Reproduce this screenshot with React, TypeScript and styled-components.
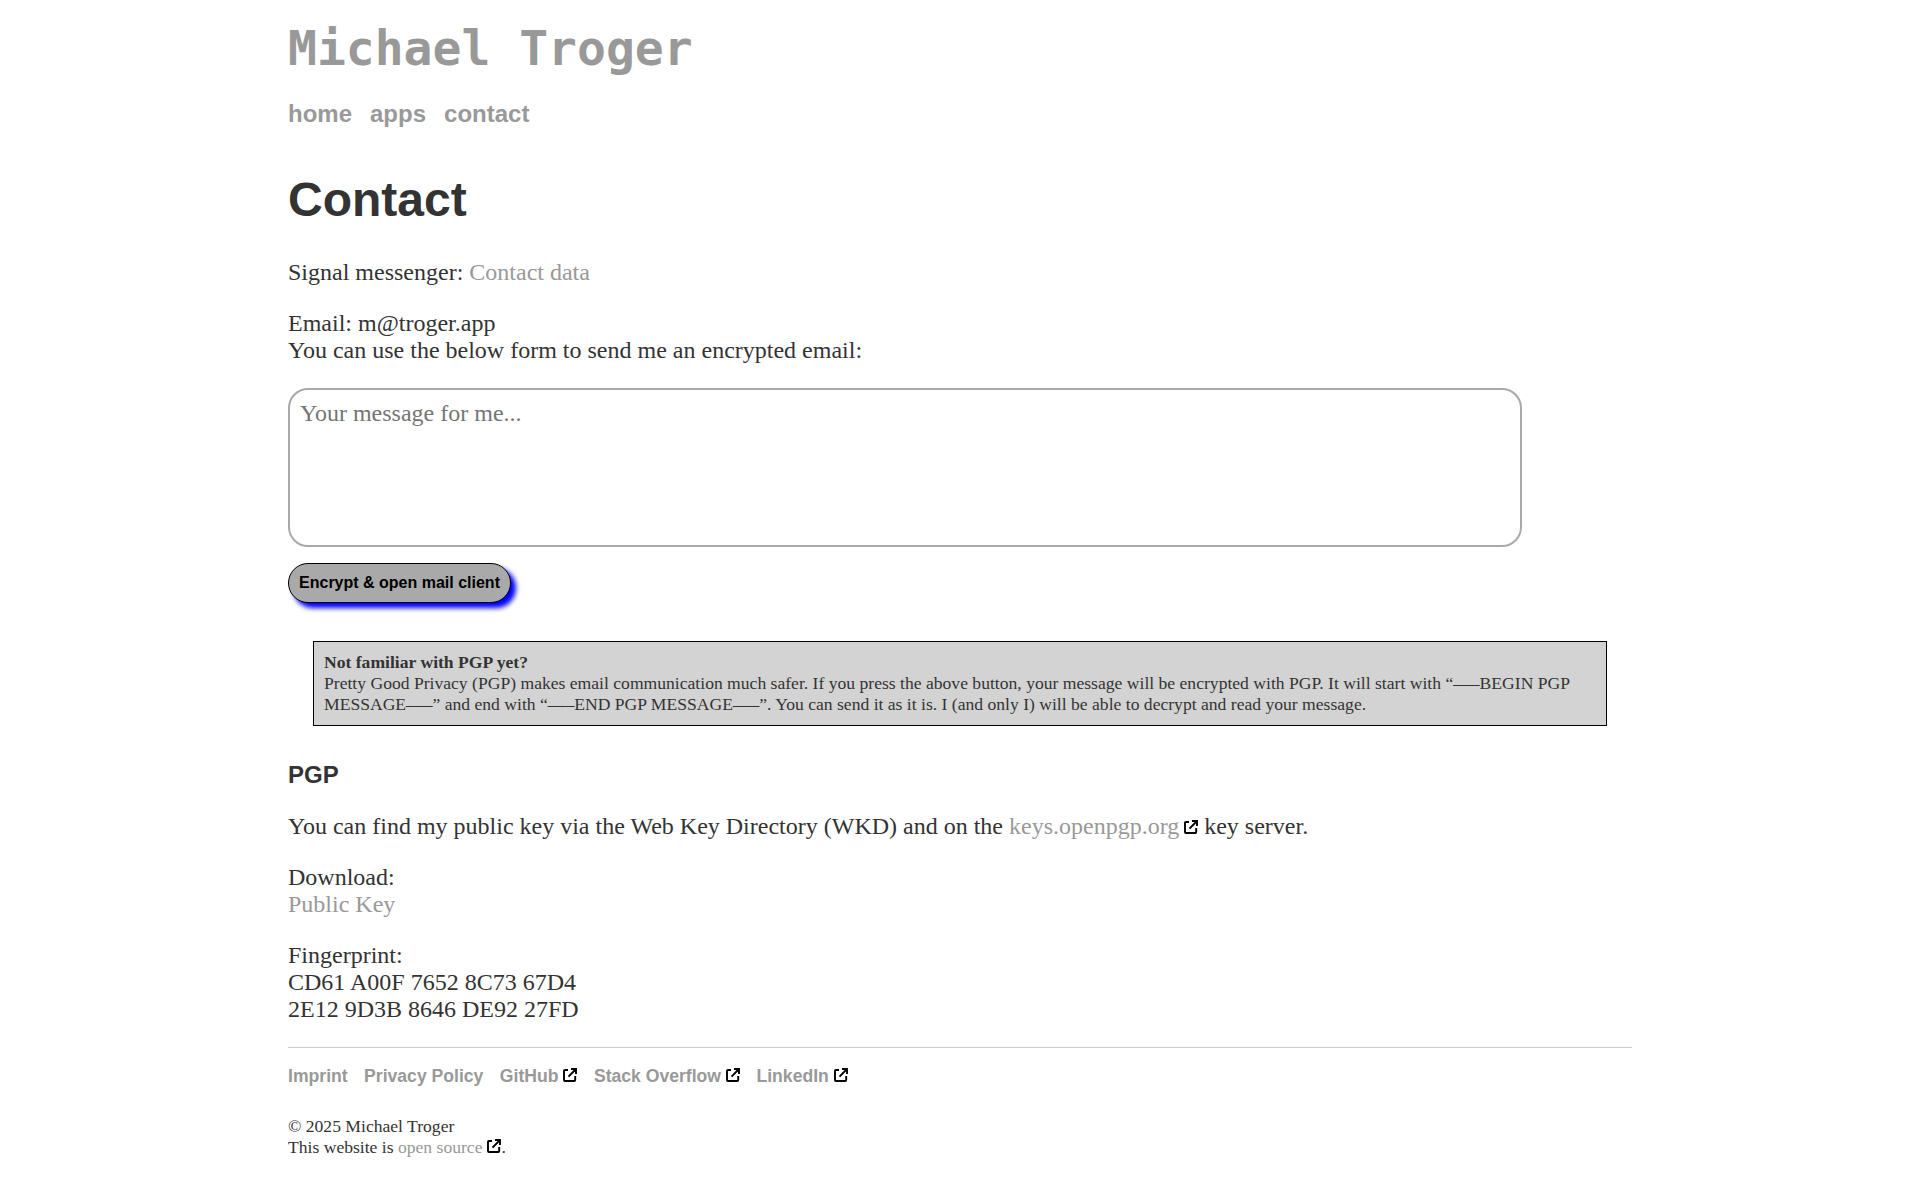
import React from "react";
import styled, { createGlobalStyle } from "styled-components";

const Global = createGlobalStyle`
  body { margin: 0; background: #fff; }
`;
const serif = `"Liberation Serif", "Times New Roman", serif`;
const sans = `"Liberation Sans", Arial, sans-serif`;

const Page = styled.div`
  width: 1344px;
  margin: 0 auto;
  padding-top: 20px;
  font: 24px ${serif};
  color: #333;
`;
const SiteName = styled.div`
  font: bold 48px/56px "DejaVu Sans Mono", monospace;
  color: #999;
`;
const Nav = styled.nav`
  display: flex;
  gap: 18px;
  margin-top: 24px;
  font: bold 24px/27px ${sans};
`;
const Link = styled.a`
  color: #999;
  text-decoration: none;
`;
const Title = styled.h1`
  margin: 45px 0 32px;
  font: bold 48px/55px ${sans};
`;
const Text = styled.p`
  margin: 24px 0 0;
`;
const Message = styled.textarea`
  display: block;
  box-sizing: border-box;
  width: 1234px;
  height: 159px;
  margin: 24px 0 16px;
  padding: 10px;
  border: 2px solid #a9a9a9;
  border-radius: 20px;
  font: 24px ${serif};
  resize: none;
  background: #fff;
`;
const Button = styled.button`
  display: block;
  height: 40px;
  width: 223px;
  padding: 0;
  border: 1px solid #000;
  border-radius: 20px;
  background: #a9a9a9;
  box-shadow: 5px 5px 5px blue;
  font: bold 16px/18px ${sans};
  color: #000;
  white-space: nowrap;
`;
const Note = styled.div`
  box-sizing: border-box;
  width: 1294px;
  margin: 38px 0 0 25px;
  padding: 10px;
  border: 1px solid #000;
  background: #d3d3d3;
  font-size: 17.6px;
`;
const Sub = styled.h2`
  margin: 35px 0 25px;
  font: bold 24px/27px ${sans};
`;
const Footer = styled.footer`
  margin-top: 24px;
  border-top: 1px solid #ccc;
`;
const FooterNav = styled.nav`
  display: flex;
  gap: 16.45px;
  margin-top: 18px;
  font: bold 17.6px/21px ${sans};
`;
const Legal = styled.p`
  margin: 29px 0 0;
  font-size: 17.6px;
`;
const Svg = styled.svg`
  width: 14px;
  height: 14px;
  margin-left: 5px;
`;
const External = () => (
  <Svg viewBox="0 0 14 14" fill="none" stroke="#000" strokeWidth="1.9">
    <path d="M5 2H2Q1 2 1 3V12Q1 13 2 13H11.2Q12.2 13 12.2 12V8" />
    <path d="M8 1H13V6M13 1L5.5 8.7" />
  </Svg>
);

export default function App() {
  return (
    <Page>
      <Global />
      <SiteName>Michael Troger</SiteName>
      <Nav><Link>home</Link><Link>apps</Link><Link>contact</Link></Nav>
      <Title>Contact</Title>
      <Text>Signal messenger: <Link>Contact data</Link></Text>
      <Text>Email: m@troger.app<br />You can use the below form to send me an encrypted email:</Text>
      <Message placeholder="Your message for me..." />
      <Button>Encrypt &amp; open mail client</Button>
      <Note><b>Not familiar with PGP yet?</b><br />Pretty Good Privacy (PGP) makes email communication much safer. If you press the above button, your message will be encrypted with PGP. It will start with “–––BEGIN PGP MESSAGE–––” and end with “–––END PGP MESSAGE–––”. You can send it as it is. I (and only I) will be able to decrypt and read your message.</Note>
      <Sub>PGP</Sub>
      <Text>You can find my public key via the Web Key Directory (WKD) and on the <Link>keys.openpgp.org</Link><External /> key server.</Text>
      <Text>Download:<br /><Link>Public Key</Link></Text>
      <Text>Fingerprint:<br />CD61 A00F 7652 8C73 67D4<br />2E12 9D3B 8646 DE92 27FD</Text>
      <Footer>
        <FooterNav>
          <Link>Imprint</Link><Link>Privacy Policy</Link>
          <span><Link>GitHub</Link><External /></span>
          <span><Link>Stack Overflow</Link><External /></span>
          <span><Link>LinkedIn</Link><External /></span>
        </FooterNav>
        <Legal>© 2025 Michael Troger<br />This website is <Link>open source</Link><External />.</Legal>
      </Footer>
    </Page>
  );
}
